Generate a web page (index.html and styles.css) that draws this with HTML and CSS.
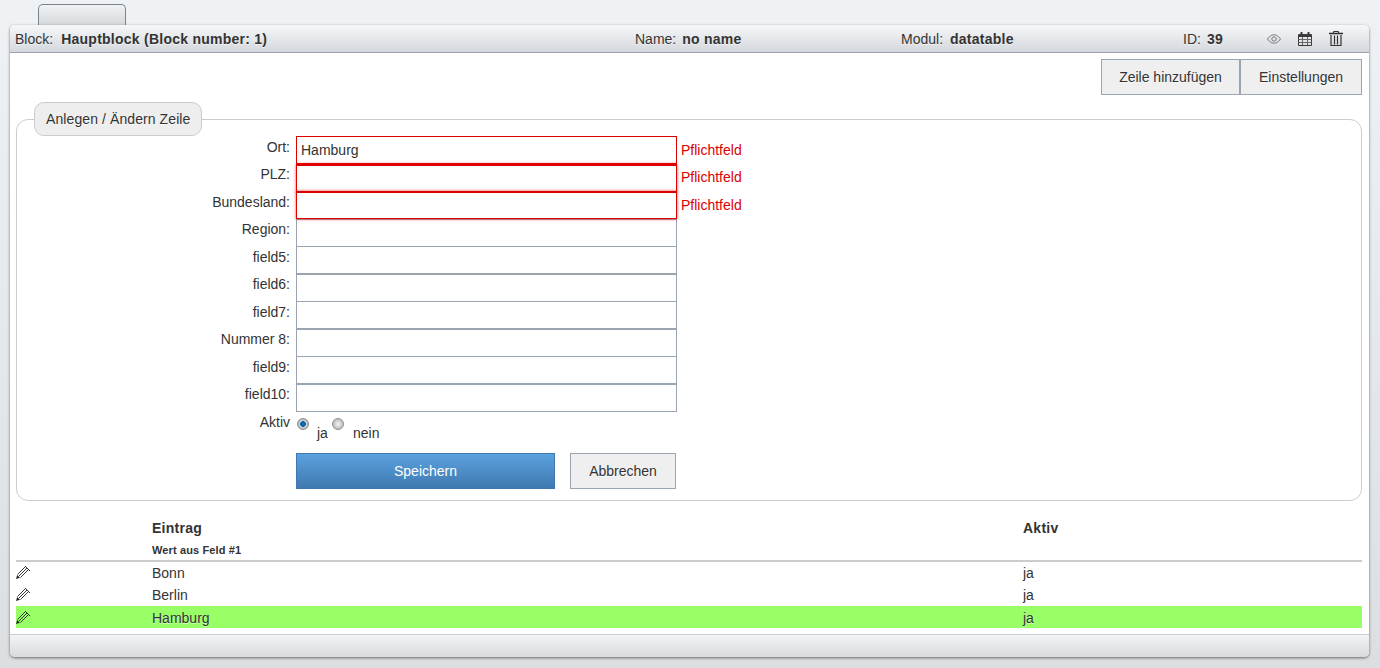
FILE: index.html
```html
<!DOCTYPE html>
<html lang="de">
<head>
<meta charset="utf-8">
<title>Hauptblock</title>
<link rel="stylesheet" href="styles.css">
</head>
<body>
<div class="tab"></div>
<section class="panel">
  <header class="head">
    <div class="info"><span>Block:</span><b>Hauptblock (Block number: 1)</b></div>
    <div class="info"><span>Name:</span><b>no name</b></div>
    <div class="info"><span>Modul:</span><b>datatable</b></div>
    <div class="info"><span>ID:</span><b>39</b></div>
    <div class="tools">
      <svg width="14" height="14" viewBox="0 0 14 14" fill="none" stroke="#777"><path d="M.5 7C3 3.6 5 2.8 7 2.8S11 3.6 13.5 7C11 10.4 9 11.2 7 11.2S3 10.4.5 7Z"/><circle cx="7" cy="7" r="2.2"/></svg>
      <svg width="14" height="14" viewBox="0 0 14 14" fill="none" stroke="#3a3a3a"><path d="M.5 2.5h13v11H.5z"/><path d="M1 4h12" stroke-width="2"/><path d="M.5 7.5h13M.5 10.5h13M4.5 5v8M9.5 5v8" stroke="#666"/><path d="M3.5 0v2M10.5 0v2" stroke-width="2"/></svg>
      <svg width="14" height="15" viewBox="0 0 14 15" fill="none" stroke="#333"><path d="M0 2.5h14" stroke-width="1.6"/><path d="M4.5 2V.5h5V2"/><path d="M2 4v10.5h10V4" stroke-width="1.2"/><path d="M5.5 4.5v9M8.500 4.500v9" stroke-width="1.2"/></svg>
    </div>
  </header>
  <div class="body">
    <div class="toolbar">
      <button class="btn btn-add" type="button">Zeile hinzufügen</button>
      <button class="btn btn-set" type="button">Einstellungen</button>
    </div>
    <fieldset class="box">
      <legend class="legend">Anlegen / Ändern Zeile</legend>
      <div class="form">
        <label class="lbl">Ort:</label><input class="inp bad" type="text" value="Hamburg"><span class="err">Pflichtfeld</span>
        <label class="lbl">PLZ:</label><input class="inp bad glow" type="text"><span class="err">Pflichtfeld</span>
        <label class="lbl">Bundesland:</label><input class="inp bad glow" type="text"><span class="err">Pflichtfeld</span>
        <label class="lbl">Region:</label><input class="inp" type="text"><span></span>
        <label class="lbl">field5:</label><input class="inp" type="text"><span></span>
        <label class="lbl">field6:</label><input class="inp" type="text"><span></span>
        <label class="lbl">field7:</label><input class="inp" type="text"><span></span>
        <label class="lbl">Nummer 8:</label><input class="inp" type="text"><span></span>
        <label class="lbl">field9:</label><input class="inp" type="text"><span></span>
        <label class="lbl">field10:</label><input class="inp" type="text"><span></span>
      </div>
      <div class="active-row">
        <span class="lbl active-lbl">Aktiv</span>
        <div class="radios">
          <span class="radio on"></span><span class="rtext ja">ja</span>
          <span class="radio"></span><span class="rtext nein">nein</span>
        </div>
      </div>
      <div class="actions">
        <button class="btn-save" type="button">Speichern</button>
        <button class="btn btn-cancel" type="button">Abbrechen</button>
      </div>
    </fieldset>
    <table class="list">
      <thead>
        <tr class="h1"><th></th><th>Eintrag</th><th>Aktiv</th></tr>
        <tr class="h2"><th></th><th>Wert aus Feld #1</th><th></th></tr>
      </thead>
      <tbody>
        <tr><td><svg class="pen" width="15" height="15" viewBox="0 0 15 15" fill="none" stroke="#222" stroke-width=".9"><path d="M0 15l1.200-4 2.800 2.800z" fill="#222" stroke="none"/><path d="M1.500 10.500L9.500 2.500M3 12L11 4M4.500 13.500L12.500 5.500M9 2l5 5"/></svg></td><td>Bonn</td><td>ja</td></tr>
        <tr><td><svg class="pen" width="15" height="15" viewBox="0 0 15 15" fill="none" stroke="#222" stroke-width=".9"><path d="M0 15l1.200-4 2.800 2.800z" fill="#222" stroke="none"/><path d="M1.500 10.500L9.500 2.500M3 12L11 4M4.500 13.500L12.500 5.500M9 2l5 5"/></svg></td><td>Berlin</td><td>ja</td></tr>
        <tr class="hit"><td><svg class="pen" width="15" height="15" viewBox="0 0 15 15" fill="none" stroke="#222" stroke-width=".9"><path d="M0 15l1.200-4 2.800 2.800z" fill="#222" stroke="none"/><path d="M1.500 10.500L9.500 2.500M3 12L11 4M4.500 13.500L12.500 5.500M9 2l5 5"/></svg></td><td>Hamburg</td><td>ja</td></tr>
      </tbody>
    </table>
  </div>
  <footer class="foot"></footer>
</section>
</body>
</html>
```

FILE: styles.css
```css
* { box-sizing: border-box; }
html, body { height: 100%; }
body {
  margin: 0;
  padding-top: 4px;
  overflow: hidden;
  background: linear-gradient(#eff2f5, #dcdfe2);
  font: 14px/16px "Liberation Sans", Arial, sans-serif;
  color: #333;
  text-shadow: 0 1px 0 rgba(255,255,255,.6);
}
b, th { letter-spacing: .25px; }
.tab {
  width: 88px;
  height: 21px;
  margin-left: 38px;
  border: 1px solid #7b848c;
  border-bottom: 0;
  border-radius: 5px 5px 0 0;
  background: linear-gradient(#f0f2f4, #d5d9dc);
}
.panel {
  width: 1359px;
  margin-left: 10px;
  border-radius: 5px;
  background: #fff;
  box-shadow: 0 1px 3px rgba(0,0,0,.55);
}
.head {
  display: grid;
  grid-template-columns: 620px 266px 282px 84px 1fr;
  height: 28px;
  align-items: center;
  padding: 0 0 0 5px;
  border-radius: 5px 5px 0 0;
  border-bottom: 1px solid #9aa3ad;
  background: linear-gradient(#f6f7f9, #d4d8dc);
}
.info { display: flex; gap: 6px; white-space: nowrap; }
.info:nth-child(1) { gap: 8px; }
.info:nth-child(3) { gap: 7px; }
.tools { display: flex; gap: 17px; align-items: center; }
.body { height: 581px; padding-top: 6px; }
.toolbar { display: flex; justify-content: flex-end; padding-right: 7px; }
.btn {
  height: 36px;
  padding: 0;
  border: 1px solid #9aa5b1;
  border-radius: 0;
  background: #efefef;
  color: #333;
  font: inherit;
  text-shadow: inherit;
}
.btn-add { width: 139px; }
.btn-set { width: 122px; }
.box {
  min-width: 0;
  width: 1346px;
  height: 399px;
  margin: 7px 0 0 6px;
  padding: 0 0 0 17px;
  border: 1px solid #ccc;
  border-radius: 12px;
}
.legend {
  height: 34px;
  padding: 8px 11px 0 11px;
  border: 1px solid #ccc;
  border-radius: 10px;
  background: #eee;
  letter-spacing: .09px;
}
.form {
  display: grid;
  grid-template-columns: 256px 381px auto;
  grid-auto-rows: 27.5px;
  column-gap: 6px;
  justify-content: start;
}
.lbl { text-align: right; padding-top: 2.9px; }
.inp {
  width: 381px;
  height: 28px;
  padding: 0 4px;
  border: 1px solid #9aa5b1;
  border-radius: 0;
  outline: 0;
  background: #fff;
  color: #333;
  font: inherit;
  text-shadow: inherit;
}
.bad { position: relative; z-index: 1; border-color: #d00; }
.glow { border-top-width: 2px; box-shadow: 0 0 3px rgba(230,0,0,.7); }
.err { margin-left: -2px; padding-top: 5.9px; color: #d00; text-shadow: none; position: relative; z-index: 2; }
.active-row {
  display: grid;
  grid-template-columns: 256px auto;
  column-gap: 6px;
  height: 42px;
}
.active-lbl { padding-top: 3px; }
.radios { display: flex; align-items: flex-start; padding-left: 1px; }
.radio {
  width: 12px;
  height: 12px;
  margin-top: 7px;
  border: 1px solid #8f8f8f;
  border-radius: 50%;
  background: radial-gradient(circle closest-side, #f4f4f4, #bdbdbd);
}
.radio.on { background: radial-gradient(circle closest-side, #0a78c0 0, #0a5f9c 52%, #d8d8d8 62%, #b4b4b4 100%); }
.rtext { padding-top: 14px; }
.ja { margin-left: 8px; width: 15px; }
.nein { margin-left: 9px; }
.actions { display: flex; gap: 15px; margin-left: 262px; }
.btn-save {
  width: 259px;
  height: 36px;
  padding: 0;
  border: 1px solid #3f79b0;
  background: linear-gradient(#5ba2df, #3f79b0);
  color: #fff;
  font: inherit;
  text-shadow: none;
}
.btn-cancel { width: 106px; }
.list {
  table-layout: fixed;
  width: 1346px;
  margin: 15px 0 0 6px;
  border-collapse: separate;
  border-spacing: 0;
}
.list th:nth-child(1), .list td:nth-child(1) { width: 136px; }
.list th:nth-child(2), .list td:nth-child(2) { width: 871px; }
.list th, .list td { padding: 0; text-align: left; }
.h1 { height: 23px; }
.h2 { height: 23px; }
.h2 th { height: 23px; padding-top: 1px; font-size: 11px; letter-spacing: .12px; border-bottom: 2px solid #ccc; }
.list tbody tr { height: 22px; }
.pen { display: block; margin: 0 0 3px 0; }
.hit { background: #9f6; }
.hit td { padding-top: 1px; }
.foot {
  height: 23px;
  border-top: 1px solid #ccc;
  border-radius: 0 0 5px 5px;
  background: linear-gradient(#f2f4f6, #d8dbde);
}
```
